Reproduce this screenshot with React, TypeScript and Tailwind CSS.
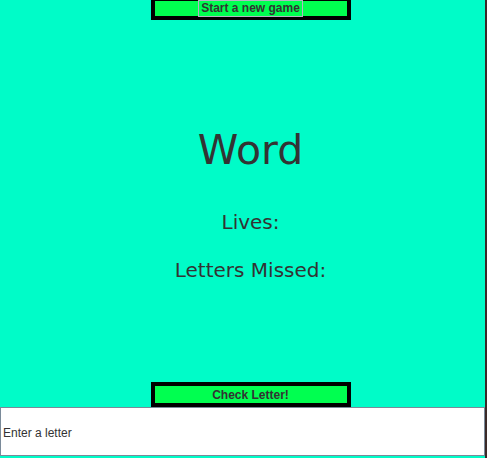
export default function App() {
  return (
    <div className="flex h-[458px] w-[487px] overflow-hidden">
      <div className="flex w-[485px] flex-col bg-[#00fcc8]">
        {/* Top button */}
        <div className="flex h-[20px] shrink-0 justify-center pl-4">
          <button className="flex h-[20px] w-[200px] items-center justify-center border-x-4 border-b-4 border-t border-black bg-[#00ff50]">
            <span className="border border-[#b4b4c4] px-[2px] font-['Liberation_Sans',Arial,sans-serif] text-[12px] font-bold leading-[15px] text-[#333333]">
              Start a new game
            </span>
          </button>
        </div>

        {/* Game info */}
        <div className="flex flex-1 flex-col items-center pl-4 font-['Comic_Sans_MS','DejaVu_Sans',sans-serif] text-[#333333]">
          <div className="mt-[110px] text-[41px] leading-none">Word</div>
          <div className="mt-[41px] text-[20px] leading-none">Lives:</div>
          <div className="mt-[28px] text-[20px] leading-none">Letters Missed:</div>
        </div>

        {/* Check button */}
        <div className="flex h-[25px] shrink-0 justify-center pl-4">
          <button className="flex h-[25px] w-[200px] items-center justify-center border-4 border-black bg-[#00ff50] font-['Liberation_Sans',Arial,sans-serif] text-[12px] font-bold text-[#333333]">
            Check Letter!
          </button>
        </div>

        {/* Input */}
        <div className="flex h-[49px] shrink-0 items-center border border-[#7a8a99] bg-white pl-[2px] pt-[3px]">
          <input
            className="w-full bg-transparent font-['Liberation_Sans',Arial,sans-serif] text-[12px] text-[#333333] outline-none placeholder:text-[#333333]"
            placeholder="Enter a letter"
          />
        </div>
        <div className="h-[2px] shrink-0" />
      </div>
      <div className="w-[2px] bg-[#3b2a28]" />
    </div>
  );
}
